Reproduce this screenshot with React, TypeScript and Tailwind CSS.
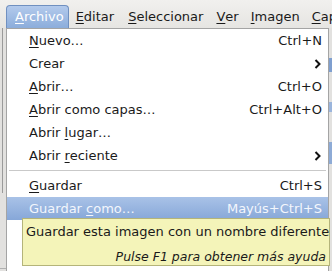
import React from 'react';

type Item = { label: string; u: number; shortcut?: string; submenu?: boolean; active?: boolean } | { sep: true };

const items: Item[] = [
  { label: 'Nuevo…', u: 0, shortcut: 'Ctrl+N' },
  { label: 'Crear', u: -1, submenu: true },
  { label: 'Abrir…', u: 0, shortcut: 'Ctrl+O' },
  { label: 'Abrir como capas…', u: 0, shortcut: 'Ctrl+Alt+O' },
  { label: 'Abrir lugar…', u: 6 },
  { label: 'Abrir reciente', u: 6, submenu: true },
  { sep: true },
  { label: 'Guardar', u: 0, shortcut: 'Ctrl+S' },
  { label: 'Guardar como…', u: 8, shortcut: 'Mayús+Ctrl+S', active: true },
];

const menus = [
  { label: 'Editar', u: 0, cls: 'px-[7px]' },
  { label: 'Seleccionar', u: 0, cls: 'px-[7px]' },
  { label: 'Ver', u: 0, cls: 'px-[6px]' },
  { label: 'Imagen', u: 0, cls: 'px-[6px]' },
  { label: 'Capa', u: 0, cls: 'px-[6px]' },
];

const Mnemonic = ({ text, u }: { text: string; u: number }) =>
  u < 0 ? (
    <>{text}</>
  ) : (
    <>
      {text.slice(0, u)}
      <span className="underline underline-offset-[2px]">{text[u]}</span>
      {text.slice(u + 1)}
    </>
  );

const Chevron = () => (
  <svg width="7" height="10" viewBox="0 0 7 10" className="mr-[1px]">
    <path d="M1.5 1 L5.5 5 L1.5 9" fill="none" stroke="#111" strokeWidth="2" />
  </svg>
);

export default function App() {
  return (
    <div className="relative w-[332px] h-[271px] overflow-hidden bg-[#e2e1df] font-['DejaVu_Sans',sans-serif] text-[13px] text-[#1a1a1a]">
      {/* menubar */}
      <div className="h-[28px] flex items-end pl-[6px] bg-gradient-to-b from-[#f1f0ee] to-[#e6e5e2] whitespace-nowrap">
        <div className="h-[23px] flex items-center pl-[8px] pr-[4px] rounded-t-[4px] border border-b-0 border-[#7090c0] bg-gradient-to-b from-[#b3caec] to-[#8caddb] text-white">
          <Mnemonic text="Archivo" u={0} />
        </div>
        {menus.map((m) => (
          <div key={m.label} className={`h-[23px] flex items-center ${m.cls}`}>
            <Mnemonic text={m.label} u={m.u} />
          </div>
        ))}
      </div>

      {/* window behind */}
      <div className="flex h-[243px]">
        <div className="w-[6px] relative">
          <div className="absolute left-[2px] top-0 h-[165px] w-[1px] bg-[#9a9a9a]" />
          <div className="absolute left-0 top-[240px] h-[1px] w-[22px] bg-[#b0b0b0]" />
        </div>
        <div className="flex-1" />
        <div className="w-[3px] flex flex-col gap-[30px] pt-[30px]">
          <div className="h-[14px] bg-[#7f9fcf]" />
          <div className="h-[10px] bg-[#9bb5dc]" />
          <div className="h-[22px] bg-[#8eabd6]" />
        </div>
      </div>

      {/* popup menu */}
      <div className="absolute left-[6px] top-[28px] w-[323px] h-[260px] bg-white border border-[#a4a4a4]">
        {items.map((it, i) =>
          'sep' in it ? (
            <div key={i} className="h-[7px] flex items-center px-[2px]">
              <div className="h-[1px] w-full bg-[#c9c9c9]" />
            </div>
          ) : (
            <div
              key={i}
              className={`h-[23px] flex items-center justify-between pl-[22px] pr-[6px] whitespace-nowrap ${
                it.active ? 'bg-gradient-to-b from-[#a9c2e7] to-[#86a7d8] text-[#f3f6fc]' : ''
              }`}
            >
              <span>
                <Mnemonic text={it.label} u={it.u} />
              </span>
              {it.shortcut && <span>{it.shortcut}</span>}
              {it.submenu && <Chevron />}
            </div>
          )
        )}
      </div>

      {/* tooltip */}
      <div className="absolute left-[22px] top-[218px] w-[308px] h-[48px] bg-[#f4f4b9] border border-[#b4b47a] px-[3px] pt-[4px] whitespace-nowrap">
        <div className="leading-[18px]">Guardar esta imagen con un nombre diferente</div>
        <div className="text-right italic text-[12.5px] leading-[15px] mt-[8px]">Pulse F1 para obtener más ayuda</div>
      </div>
    </div>
  );
}
